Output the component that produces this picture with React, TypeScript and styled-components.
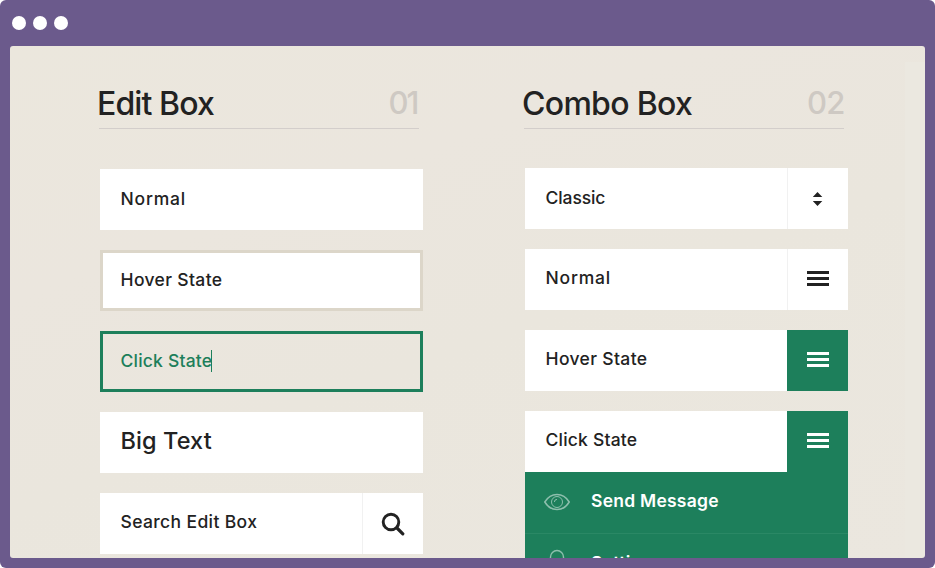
import React from "react";
import styled, { createGlobalStyle } from "styled-components";

const GREEN = "#1d7f5b";
const INK = "#222222";

const GlobalStyle = createGlobalStyle`
  * { box-sizing: border-box; }
  body { margin: 0; background: #fff; overflow: hidden; }
`;

const Window = styled.div`
  display: flex;
  flex-direction: column;
  width: 935px;
  height: 568px;
  padding: 0 10px 10px;
  border-radius: 6px;
  background: #6b5a8c;
  font-family: Inter, "Open Sans", sans-serif;
  color: ${INK};
`;

const TitleBar = styled.div`
  display: flex;
  align-items: center;
  gap: 7px;
  flex: none;
  height: 46px;
  padding-left: 2px;
`;

const Dot = styled.span`
  width: 14px;
  height: 14px;
  border-radius: 50%;
  background: #fff;
`;

const Screen = styled.main`
  display: flex;
  align-items: flex-start;
  gap: 102px;
  flex: none;
  height: 512px;
  padding: 38px 0 0 90px;
  border-radius: 3px;
  overflow: hidden;
  background:
    linear-gradient(#ebe8e0, #ebe8e0) 895px 16px / 20px 496px no-repeat,
    linear-gradient(160deg, #ebe7dd 0%, #ebe6de 30%, #eae6dd 55%, #ebe7df 100%);
`;

const Column = styled.section`
  width: 323px;
`;

const Header = styled.header`
  display: flex;
  justify-content: space-between;
  width: 320px;
  height: 45px;
  margin-left: -1px;
  border-bottom: 1px solid #d3cecb;
  line-height: 39px;
`;

const Title = styled.h1<{ $track: number }>`
  margin: 0 0 0 -2px;
  font-size: 32px;
  line-height: inherit;
  font-weight: 500;
  letter-spacing: ${(p) => p.$track}px;
  white-space: nowrap;
`;

const Numeral = styled.span<{ $track: number; $inset?: number }>`
  margin-right: ${(p) => p.$inset ?? 0}px;
  font-size: 31px;
  font-weight: 500;
  line-height: 38px;
  color: #cec9c3;
  letter-spacing: ${(p) => p.$track}px;
`;

const Stack = styled.div<{ $top: number }>`
  display: flex;
  flex-direction: column;
  gap: 20px;
  padding-top: ${(p) => p.$top}px;
`;

const Field = styled.div<{ $outline?: string; $clear?: boolean }>`
  display: flex;
  height: 61px;
  background: ${(p) => (p.$clear ? "transparent" : "#fff")};
  color: ${(p) => (p.$clear ? GREEN : INK)};
  box-shadow: ${(p) => (p.$outline ? `inset 0 0 0 3px ${p.$outline}` : "none")};
`;

const Label = styled.span<{ $track: number; $big?: boolean; $raised?: boolean }>`
  flex: 1;
  padding-left: 20.5px;
  font-size: ${(p) => (p.$big ? 23.5 : 17.5)}px;
  font-weight: 500;
  line-height: ${(p) => (p.$raised ? 57 : 59)}px;
  letter-spacing: ${(p) => p.$track}px;
  white-space: nowrap;
`;

const Caret = styled.i`
  display: inline-block;
  width: 1px;
  height: 22px;
  margin-left: -1px;
  vertical-align: -5px;
  background: ${GREEN};
`;

const Action = styled.span<{ $active?: boolean; $raised?: boolean }>`
  display: flex;
  flex: none;
  align-items: center;
  justify-content: center;
  width: 61px;
  padding-bottom: ${(p) => (p.$raised ? 2 : 0)}px;
  border-left: 1px solid ${(p) => (p.$active ? GREEN : "#f1f1f1")};
  background: ${(p) => (p.$active ? GREEN : "#fff")};
  color: ${(p) => (p.$active ? "#fff" : INK)};
`;

const Icon = styled.svg`
  display: block;
  flex: none;
`;

const Menu = styled.div`
  background: ${GREEN};
  color: #fff;
`;

const MenuItem = styled.div`
  display: flex;
  height: 62px;
  padding-left: 19px;
  border-bottom: 1px solid #2a8865;
  font-size: 17.5px;
  font-weight: 600;
  line-height: 58px;
  white-space: nowrap;
`;

const MenuIcon = styled.span<{ $top: number }>`
  flex: none;
  width: 47px;
  padding-top: ${(p) => p.$top}px;
  color: #8dbfad;
`;

const MenuText = styled.span<{ $track: number }>`
  letter-spacing: ${(p) => p.$track}px;
`;

const Bars = () => (
  <Icon width="22" height="15" viewBox="0 0 22 15" fill="currentColor">
    <path d="M0 0h22v3H0zM0 6h22v3H0zM0 12h22v3H0z" />
  </Icon>
);

const Sorter = () => (
  <Icon width="11" height="14" viewBox="0 0 11 14" fill="currentColor">
    <path d="M4.500 0L9.300 5H-.3zM-.3 9h9.600L4.500 14z" />
  </Icon>
);

const Magnifier = () => (
  <Icon width="24" height="24" viewBox="0 0 24 24" fill="none" stroke="currentColor">
    <circle cx="10" cy="10" r="7.8" strokeWidth="2.900" />
    <path d="M16 16l5.800 5.800" strokeWidth="3.200" strokeLinecap="round" />
  </Icon>
);

const Eye = () => (
  <Icon width="26" height="18" viewBox="0 0 26 18" fill="none" stroke="currentColor">
    <path d="M.8 9C4 3.700 8.200 1.500 13 1.500S22 3.700 25.200 9C22 14.300 17.800 16.500 13 16.500S4 14.300.8 9z" strokeWidth="1.500" />
    <circle cx="13" cy="9" r="5.500" strokeWidth="1" />
    <path d="M10.400 9a2.600 2.600 0 0 1 2.600-2.600" strokeWidth="1" />
  </Icon>
);

const Bell = () => (
  <Icon width="26" height="24" viewBox="0 0 26 24" fill="none" stroke="currentColor" strokeWidth="1.400">
    <path d="M5 19c1.500-2 1.500-5 1.500-11a6.500 6.500 0 0 1 13 0c0 6 0 9 1.500 11z" />
  </Icon>
);

export default function App() {
  return (
    <>
      <GlobalStyle />
      <Window>
        <TitleBar>
          <Dot />
          <Dot />
          <Dot />
        </TitleBar>
        <Screen>
          <Column>
            <Header>
              <Title $track={-0.9}>Edit Box</Title>
              <Numeral $track={-2} $inset={1.5}>01</Numeral>
            </Header>
            <Stack $top={40}>
              <Field>
                <Label $track={0.8}>Normal</Label>
              </Field>
              <Field $outline="#dcd6c9">
                <Label $track={0.35}>Hover State</Label>
              </Field>
              <Field $outline={GREEN} $clear>
                <Label $track={0.2}>
                  Click State
                  <Caret />
                </Label>
              </Field>
              <Field>
                <Label $track={0.1} $big $raised>Big Text</Label>
              </Field>
              <Field>
                <Label $track={0.37} $raised>Search Edit Box</Label>
                <Action>
                  <Magnifier />
                </Action>
              </Field>
            </Stack>
          </Column>
          <Column>
            <Header>
              <Title $track={-0.7}>Combo Box</Title>
              <Numeral $track={-0.8} $inset={-0.5}>02</Numeral>
            </Header>
            <Stack $top={39}>
              <Field>
                <Label $track={-0.1}>Classic</Label>
                <Action>
                  <Sorter />
                </Action>
              </Field>
              <Field>
                <Label $track={0.8} $raised>Normal</Label>
                <Action $raised>
                  <Bars />
                </Action>
              </Field>
              <Field>
                <Label $track={0.35} $raised>Hover State</Label>
                <Action $active $raised>
                  <Bars />
                </Action>
              </Field>
              <div>
                <Field>
                  <Label $track={0.2} $raised>Click State</Label>
                  <Action $active $raised>
                    <Bars />
                  </Action>
                </Field>
                <Menu>
                  <MenuItem>
                    <MenuIcon $top={21}>
                      <Eye />
                    </MenuIcon>
                    <MenuText $track={0.25}>Send Message</MenuText>
                  </MenuItem>
                  <MenuItem>
                    <MenuIcon $top={15}>
                      <Bell />
                    </MenuIcon>
                    <MenuText $track={0.3}>Settings</MenuText>
                  </MenuItem>
                </Menu>
              </div>
            </Stack>
          </Column>
        </Screen>
      </Window>
    </>
  );
}
